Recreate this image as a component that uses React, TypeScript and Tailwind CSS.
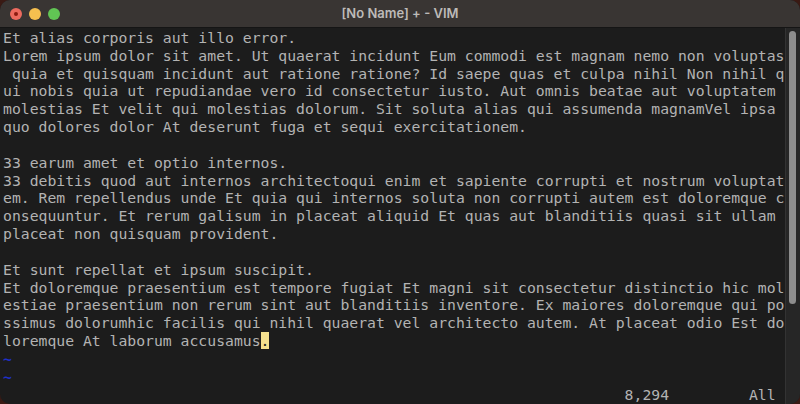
const lines: string[] = [
  "Et alias corporis aut illo error.",
  "Lorem ipsum dolor sit amet. Ut quaerat incidunt Eum commodi est magnam nemo non voluptas",
  " quia et quisquam incidunt aut ratione ratione? Id saepe quas et culpa nihil Non nihil q",
  "ui nobis quia ut repudiandae vero id consectetur iusto. Aut omnis beatae aut voluptatem ",
  "molestias Et velit qui molestias dolorum. Sit soluta alias qui assumenda magnamVel ipsa ",
  "quo dolores dolor At deserunt fuga et sequi exercitationem.",
  "",
  "33 earum amet et optio internos.",
  "33 debitis quod aut internos architectoqui enim et sapiente corrupti et nostrum voluptat",
  "em. Rem repellendus unde Et quia qui internos soluta non corrupti autem est doloremque c",
  "onsequuntur. Et rerum galisum in placeat aliquid Et quas aut blanditiis quasi sit ullam ",
  "placeat non quisquam provident.",
  "",
  "Et sunt repellat et ipsum suscipit.",
  "Et doloremque praesentium est tempore fugiat Et magni sit consectetur distinctio hic mol",
  "estiae praesentium non rerum sint aut blanditiis inventore. Ex maiores doloremque qui po",
  "ssimus dolorumhic facilis qui nihil quaerat vel architecto autem. At placeat odio Est do",
];

function TrafficLights() {
  return (
    <div className="flex items-center gap-[7px] pl-[10px]">
      <span className="relative h-[12px] w-[12px] rounded-full bg-[#ed6a5e]">
        <span className="absolute left-[4px] top-[4px] h-[4px] w-[4px] rounded-full bg-[#8c1a10]" />
      </span>
      <span className="h-[12px] w-[12px] rounded-full bg-[#f5bf4f]" />
      <span className="h-[12px] w-[12px] rounded-full bg-[#61c554]" />
    </div>
  );
}

export default function App() {
  return (
    <div className="h-[404px] w-[800px] overflow-hidden bg-[#3a1a14]">
      <div className="flex h-full flex-col overflow-hidden rounded-[10px] bg-[#1c1c1c]">
        <div className="relative flex h-[28px] shrink-0 items-center border-b border-[#151515] bg-[#393533]">
          <TrafficLights />
          <div className="absolute inset-0 flex items-center justify-center text-[13px] font-semibold text-[#bdbab8] [font-family:'Inter','Liberation_Sans',sans-serif]">
            [No Name] + - VIM
          </div>
        </div>
        <div className="flex min-h-0 flex-1">
          <div className="flex-1 whitespace-pre pl-[3px] pt-[1px] text-[14.75px] leading-[17.83px] text-[#b3b3b3] [font-family:'DejaVu_Sans_Mono',monospace]">
            {lines.map((l, i) => (
              <div key={i} className="h-[17.83px]">{l}</div>
            ))}
            <div className="h-[17.83px]">
              loremque At laborum accusamus
              <span className="bg-[#f3df8e] text-[#1c1c1c]">.</span>
            </div>
            <div className="h-[17.83px] font-bold text-[#1f30c8]">~</div>
            <div className="h-[17.83px] font-bold text-[#1f30c8]">~</div>
            <div className="h-[17.83px]">
              {"                                                                      8,294         All"}
            </div>
          </div>
          <div className="w-[15px] shrink-0 border-l border-[#333333] bg-[#262626] pl-[3px] pt-[3px]">
            <div className="h-[273px] w-[7px] rounded-full bg-[#8d8d8d]" />
          </div>
        </div>
      </div>
    </div>
  );
}
